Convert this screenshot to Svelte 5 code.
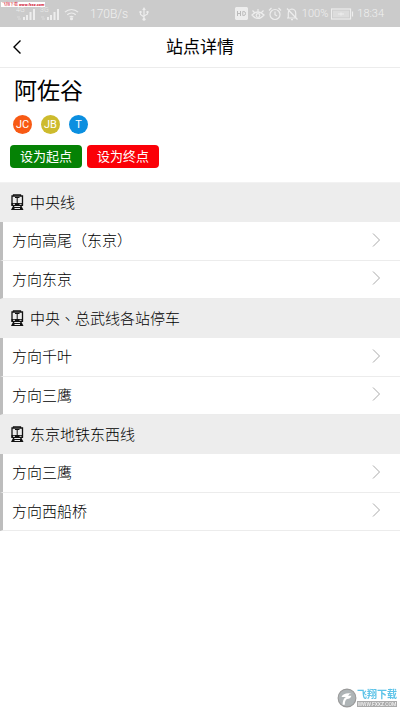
<script lang="ts">
  interface Line {
    name: string;
    directions: string[];
  }

  const badges = [
    { code: 'JC', tone: 'orange' },
    { code: 'JB', tone: 'olive' },
    { code: 'T', tone: 'blue' },
  ];

  const lines: Line[] = [
    { name: '中央线', directions: ['方向高尾（东京）', '方向东京'] },
    { name: '中央、总武线各站停车', directions: ['方向千叶', '方向三鹰'] },
    { name: '东京地铁东西线', directions: ['方向三鹰', '方向西船桥'] },
  ];
</script>

{#snippet signal(label: string)}
  <svg class="signal" width="20" height="16" viewBox="0 0 20 16" aria-hidden="true">
    <text x="0" y="6">{label}</text>
    <path d="M8 11v3M11 9v5M14.5 6v8M18 3v11" />
    <path class="faint" d="M1 11h3M2 13h3" />
  </svg>
{/snippet}

<div class="page">
  <div class="status">
    <div class="promo"><b>飞翔下载</b> <i>www.fxxz.com</i></div>
    <div class="left">
      {@render signal('4G')}
      {@render signal('3G')}
      <svg class="wifi" width="15" height="14" viewBox="0 0 16 14" aria-hidden="true">
        <path d="M1 5a10 10 0 0 1 14 0M3.5 7.8a6.5 6.5 0 0 1 9 0M6 10.4a3 3 0 0 1 4 0" />
        <circle class="solid" cx="8" cy="12" r="1" />
      </svg>
      <span class="speed">170B/s</span>
      <svg class="usb" width="10" height="14" viewBox="0 0 10 14" aria-hidden="true">
        <path d="M5 2v10M1.5 5v2.5L5 10M8.5 5v2L5 9" />
        <path class="solid tips" d="M5 0l1.8 3H3.2zM.5 4h2v2h-2zM7.5 4h2v2h-2z" />
        <circle class="solid tips" cx="5" cy="12.3" r="1.5" />
      </svg>
    </div>
    <div class="right">
      <svg width="13" height="13" viewBox="0 0 13 13" aria-hidden="true">
        <rect class="solid" x=".5" y=".5" width="12" height="12" rx="1.5" />
        <path class="cut" d="M2.5 4v5M5.5 4v5M2.5 6.5h3M7.8 4.5v4h1q1.7 0 1.7-2t-1.7-2z" />
      </svg>
      <svg width="14" height="14" viewBox="0 0 14 14" aria-hidden="true">
        <path d="M1 8q6-6 12 0-6 7-12 0zM1.5 3.5l2 2M7 2v2.5M12.5 3.5l-2 2" />
        <circle cx="7" cy="8.5" r="1.8" />
      </svg>
      <svg width="14" height="14" viewBox="0 0 14 14" aria-hidden="true">
        <circle cx="7" cy="7.5" r="5" />
        <path d="M7 4.5v3.2l2 1.3M1 3.5L3.5 1M13 3.5L10.5 1" />
      </svg>
      <svg width="14" height="14" viewBox="0 0 14 14" aria-hidden="true">
        <path d="M2 11h9M3.3 10.5V6q0-3.5 3.7-4 3.7.5 3.7 4v4.5M6 12.7h2M2 1.5l10.5 11" />
      </svg>
      <span class="percent">100%</span>
      <svg class="battery" width="23" height="12" viewBox="0 0 23 12" aria-hidden="true">
        <rect x=".5" y="1" width="19" height="10" />
        <rect class="fill" x="2" y="2.5" width="16" height="7" />
        <path class="plus" d="M7 6h6M10 4.5v3M21.5 3.5v5" />
      </svg>
      <span class="clock">18:34</span>
    </div>
  </div>

  <header class="nav">
    <button type="button" class="back" aria-label="返回">
      <svg width="10" height="16" viewBox="0 0 10 16" aria-hidden="true"><path d="M8.5 1.5L2 8l6.5 6.5" /></svg>
    </button>
    <h1>站点详情</h1>
  </header>

  <main>
    <section class="station">
      <h2>阿佐谷</h2>
      <div class="badges">
        {#each badges as badge}
          <span class="badge {badge.tone}">{badge.code}</span>
        {/each}
      </div>
      <div class="actions">
        <button type="button" class="start">设为起点</button>
        <button type="button" class="end">设为终点</button>
      </div>
    </section>

    {#each lines as line}
      <section>
        <h3>
          <svg width="14" height="16" viewBox="0 0 14 16" aria-hidden="true">
            <path class="roof" d="M3.5 2V.8h7V2" />
            <path class="body" d="M2 2h10.5v9H2z" />
            <path class="pane" d="M7.2 3.5V9M5 3.5h4.500" />
            <path class="base" d="M1.500 9h11.500v3H1.500z" />
            <path class="lamps" d="M3 10.300h2M9.500 10.300h2" />
            <path class="base" d="M3 12h1.500L4 13h6.500l-.5-1h1.500l2 4H1z" />
            <path class="lamps" d="M4.500 14.500h5.500" />
          </svg>
          {line.name}
        </h3>
        <ul>
          {#each line.directions as direction}
            <li>
              <a href="#direction">
                {direction}
                <svg width="9" height="16" viewBox="0 0 9 16" aria-hidden="true"><path d="M1 1.5L7.5 8 1 14.5" /></svg>
              </a>
            </li>
          {/each}
        </ul>
      </section>
    {/each}
  </main>

  <div class="watermark">
    <svg width="20" height="20" viewBox="0 0 18 18" aria-hidden="true">
      <circle cx="9" cy="9" r="8" />
      <path d="M5 15q0-5 3-7H4q2-4 9-3-2 0-3 2h3q-1 3-4 3-2 1-2 5z" />
    </svg>
    <div class="mark">
      <b>飞翔下载</b>
      <span>WWW.FXXZ.COM</span>
    </div>
  </div>
</div>

<style>
  :global(body) {
    margin: 0;
    background: #fff;
  }

  .page {
    min-height: 100vh;
    color: #000;
    font-family: Roboto, 'Noto Sans CJK SC', sans-serif;
    font-size: 15px;
  }

  h1, h2, h3, ul {
    margin: 0;
    padding: 0;
    font-weight: 400;
  }

  svg {
    flex: none;
    fill: none;
  }

  button {
    border: 0;
    font-family: inherit;
    cursor: pointer;
  }

  /* status bar */
  .status {
    position: relative;
    display: flex;
    justify-content: space-between;
    box-sizing: border-box;
    height: 27px;
    padding: 0 16px;
    background: #cbcbcb;
    color: #f0f0f0;
    font-size: 11px;
    font-weight: 300;
  }
  .status svg { stroke: #ededed; stroke-width: 1.2; }
  .status .solid { fill: #ededed; }
  .status .tips { stroke: none; }
  .status .cut { stroke: #bbb; stroke-width: 1; }
  .status .fill { fill: #dcdcdc; stroke: none; }
  .left, .right { display: flex; align-items: center; }
  .left { gap: 4px; }
  .right { gap: 3px; }
  .signal text { fill: #ededed; stroke: none; font-size: 7px; }
  .status .signal { stroke-width: 2; }
  .status .faint { stroke-width: 1; opacity: 0.5; }
  .speed { margin: 0 7px; font-size: 12px; }
  .promo {
    position: absolute;
    top: 2px;
    left: 1px;
    z-index: 1;
    padding: 0 1px;
    background: #fff;
    color: #d0102c;
    font-size: 4px;
    line-height: 5px;
    white-space: nowrap;
  }
  .promo i { font-weight: 700; }

  /* title bar */
  .nav {
    display: grid;
    grid-template-columns: 40px 1fr 40px;
    align-items: center;
    height: 40px;
    border-bottom: 1px solid #ececec;
  }
  .back { height: 40px; padding: 0 0 0 12px; background: none; text-align: left; }
  .back svg { display: block; stroke: #000; stroke-width: 1.4; }
  h1 { font-size: 17px; line-height: 40px; text-align: center; }

  /* station summary */
  .station { padding: 8px 10px 14px; border-bottom: 1px solid #f2f2f2; }
  h2 { padding-left: 4px; font-size: 23px; line-height: 32px; }
  .badges { display: flex; gap: 9px; padding: 7px 3px 11px; }
  .badge {
    width: 19px;
    height: 19px;
    border-radius: 50%;
    color: #fff;
    font-size: 11px;
    line-height: 19px;
    text-align: center;
  }
  .orange { background: #f85a14; }
  .olive { background: #cdbb2d; }
  .blue { background: #0b8fe0; }
  .actions { display: flex; gap: 5px; }
  .actions button {
    width: 72px;
    height: 23px;
    padding: 0;
    border-radius: 4px;
    color: #fff;
    font-size: 13px;
    line-height: 23px;
  }
  .actions .start { background: #058205; }
  .actions .end { background: #fb0007; }

  /* lines and their directions */
  h3 {
    display: flex;
    align-items: center;
    gap: 6px;
    box-sizing: border-box;
    height: 39px;
    padding: 0 0 2px 10px;
    background: #ededed;
    font-family: 'Noto Sans CJK TC', 'Noto Sans CJK SC', sans-serif;
    font-size: 15px;
    font-weight: 300;
  }
  h3 svg { stroke: #111; stroke-width: 1.3; }
  h3 .pane { stroke-width: 1; }
  h3 .base { fill: #111; stroke: none; }
  h3 .lamps { stroke: #ededed; stroke-width: 1; }
  ul { list-style: none; }
  a {
    display: flex;
    align-items: center;
    justify-content: space-between;
    box-sizing: border-box;
    height: 39px;
    padding: 0 19px 3px 9px;
    border-bottom: 1px solid #ececec;
    border-left: 3px solid #bdbdbd;
    color: inherit;
    font-weight: 300;
    text-decoration: none;
  }
  li:last-child a { height: 38px; }
  a svg { stroke: #aaa; stroke-width: 1; }

  /* site mark over the bottom corner */
  .watermark {
    position: fixed;
    right: 3px;
    bottom: 3px;
    display: flex;
    align-items: center;
  }
  .watermark circle { fill: #aeb4b6; stroke: #999; }
  .watermark path { fill: #fff; }
  .mark b {
    display: block;
    color: #5cc3e8;
    font-size: 10px;
    line-height: 12px;
  }
  .mark span {
    display: block;
    background: #aaa;
    color: #fff;
    font-size: 5px;
    line-height: 6px;
    text-align: center;
  }
</style>
